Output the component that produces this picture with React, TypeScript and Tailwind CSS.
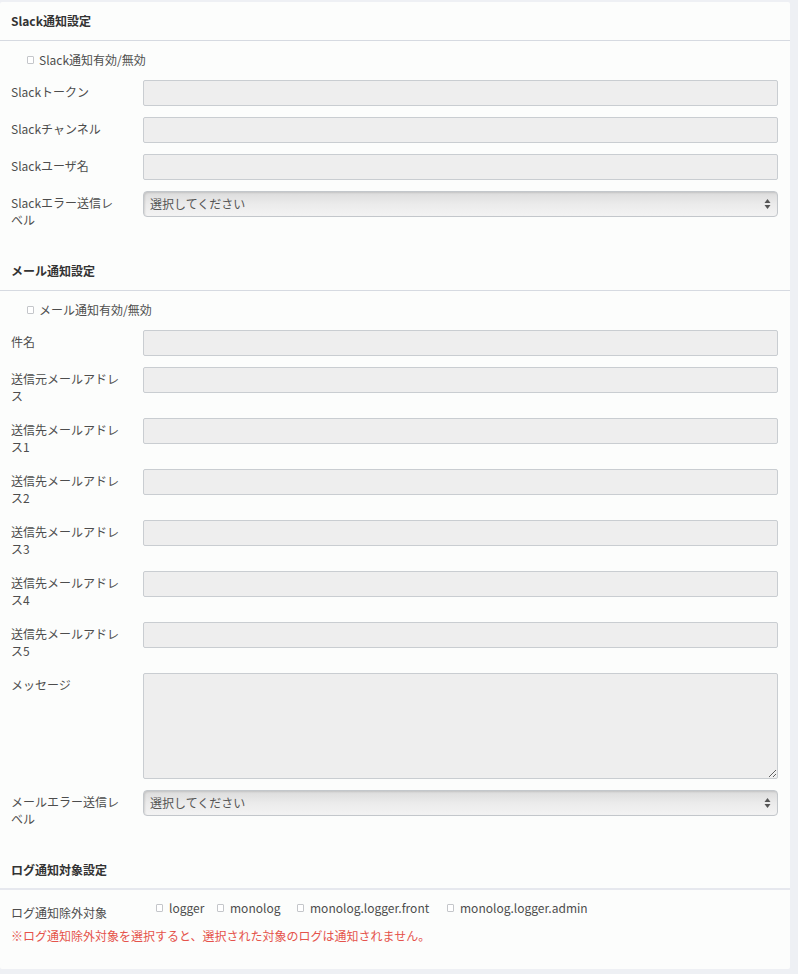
import React from "react";

const font = { fontFamily: '"Noto Sans CJK JP", "Noto Sans", sans-serif' };

const Check = () => (
  <span className="inline-block w-[7px] h-[8px] border border-[#c4c6ca] bg-white rounded-[1px]" />
);

const Header = ({ title, thick }: { title: string; thick?: boolean }) => (
  <div
    className={
      "h-[39px] px-[11px] flex items-center font-bold text-[12px] text-[#333] " +
      (thick ? "border-b-2 border-[#e6e8ee]" : "border-b border-[#d6dae1]")
    }
  >
    {title}
  </div>
);

const Label = ({ text }: { text: string }) => (
  <div className="w-[132px] shrink-0 pr-[19px] pt-[3px] pb-[3px] leading-[17px] text-[12px] text-[#4d4d4d] break-all">
    {text}
  </div>
);

const Input = ({ label }: { label: string }) => (
  <div className="flex items-start mb-[11px]">
    <Label text={label} />
    <div className="flex-1 h-[26px] bg-[#eeeeee] border border-[#c9cdd1] rounded-[2px]" />
  </div>
);

const Select = ({ label }: { label: string }) => (
  <div className="flex items-start mb-[11px]">
    <Label text={label} />
    <div className="flex-1 h-[26px] flex items-center justify-between pl-[6px] pr-[6px] rounded-[4px] border border-[#c3c7cb] bg-linear-to-b from-[#dcdcdc] via-[#ebebeb] to-[#f3f3f3] shadow-[inset_1px_1px_2px_rgba(0,0,0,0.12)] text-[12px] text-[#555]">
      <span>選択してください</span>
      <svg width="7" height="12" viewBox="0 0 7 12">
        <path d="M3.5 1 L6.5 5 L0.5 5 Z" fill="#555" />
        <path d="M3.5 11 L6.5 7 L0.5 7 Z" fill="#555" />
      </svg>
    </div>
  </div>
);

const Toggle = ({ text }: { text: string }) => (
  <div className="h-[20px] pl-[16px] mb-[10px] flex items-center gap-[5px] text-[12px] text-[#4d4d4d]">
    <Check />
    <span>{text}</span>
  </div>
);

export default function App() {
  return (
    <div className="min-h-screen bg-[#eef0f4] pt-[2px] pr-[8px] pb-[4px]" style={font}>
      <div className="bg-[#fcfdfc] rounded-[2px]">
        <Header title="Slack通知設定" />
        <div className="pt-[9px] pb-[10px] pl-[11px] pr-[12px]">
          <Toggle text="Slack通知有効/無効" />
          <Input label="Slackトークン" />
          <Input label="Slackチャンネル" />
          <Input label="Slackユーザ名" />
          <Select label="Slackエラー送信レベル" />
        </div>

        <Header title="メール通知設定" />
        <div className="pt-[9px] pb-[10px] pl-[11px] pr-[12px]">
          <Toggle text="メール通知有効/無効" />
          <Input label="件名" />
          <Input label="送信元メールアドレス" />
          <Input label="送信先メールアドレス1" />
          <Input label="送信先メールアドレス2" />
          <Input label="送信先メールアドレス3" />
          <Input label="送信先メールアドレス4" />
          <Input label="送信先メールアドレス5" />
          <div className="flex items-start mb-[11px]">
            <Label text="メッセージ" />
            <textarea
              className="flex-1 h-[106px] bg-[#eeeeee] border border-[#c9cdd1] rounded-[2px] outline-none"
              defaultValue=""
            />
          </div>
          <Select label="メールエラー送信レベル" />
        </div>

        <Header title="ログ通知対象設定" thick />
        <div className="pt-[9px] pb-[24px] pl-[11px] pr-[12px]">
          <div className="flex items-start">
            <div className="w-[145px] shrink-0 pt-[5px] leading-[17px] text-[12px] text-[#4d4d4d]">
              ログ通知除外対象
            </div>
            <div className="flex items-center leading-[17px] text-[12px] text-[#4d4d4d]">
              <label className="w-[61px] flex items-center gap-[6px]">
                <Check />
                <span>logger</span>
              </label>
              <label className="w-[80px] flex items-center gap-[6px]">
                <Check />
                <span>monolog</span>
              </label>
              <label className="w-[150px] flex items-center gap-[6px]">
                <Check />
                <span>monolog.logger.front</span>
              </label>
              <label className="flex items-center gap-[6px]">
                <Check />
                <span>monolog.logger.admin</span>
              </label>
            </div>
          </div>
          <div className="mt-[6px] leading-[18px] text-[12px] text-[#e5534b]">
            ※ログ通知除外対象を選択すると、選択された対象のログは通知されません。
          </div>
        </div>
      </div>
    </div>
  );
}
